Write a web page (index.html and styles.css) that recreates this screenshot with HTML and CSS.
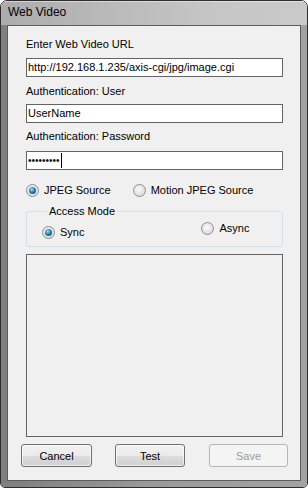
FILE: index.html
```html
<!DOCTYPE html>
<html lang="en">
  <head>
    <meta charset="UTF-8" />
    <meta name="viewport" content="width=device-width, initial-scale=1.0" />
    <title>Web Video</title>
    <link rel="stylesheet" href="styles.css">
  </head>
  <body>
    <div class="window">
      <div class="titlebar">Web Video</div>
      <div class="frame">
        <div class="client">
          <label class="label first">Enter Web Video URL</label>
          <div class="textbox url">http://192.168.1.235/axis-cgi/jpg/image.cgi</div>

          <label class="label user">Authentication: User</label>
          <div class="textbox">UserName</div>

          <label class="label pass">Authentication: Password</label>
          <div class="textbox password"><span class="dots">•••••••••</span><span class="caret"></span></div>

          <div class="sources">
            <div class="option">
              <span class="radio checked"></span>
              <span>JPEG Source</span>
            </div>
            <div class="option motion">
              <span class="radio"></span>
              <span>Motion JPEG Source</span>
            </div>
          </div>

          <fieldset class="group">
            <legend>Access Mode</legend>
            <div class="modes">
              <div class="option sync">
                <span class="radio checked"></span>
                <span>Sync</span>
              </div>
              <div class="option async">
                <span class="radio"></span>
                <span>Async</span>
              </div>
            </div>
          </fieldset>

          <div class="picture"></div>

          <div class="buttons">
            <button class="btn cancel">Cancel</button>
            <button class="btn test">Test</button>
            <button class="btn save" disabled>Save</button>
          </div>
        </div>
      </div>
    </div>
  </body>
</html>
```

FILE: styles.css
```css
* {
  margin: 0;
  padding: 0;
  box-sizing: border-box;
  font-family: "Liberation Sans", Arial, sans-serif;
}

body {
  background: #ffffff;
}

.window {
  width: 308px;
  height: 488px;
  border: 1px solid #2e2e2e;
  border-radius: 7px 7px 5px 5px;
  overflow: hidden;
  display: flex;
  flex-direction: column;
}

.titlebar {
  height: 24px;
  padding-left: 7px;
  font-size: 12px;
  line-height: 23px;
  color: #000;
  background: linear-gradient(to right, #acacac, #bdbdbd 45%, #c6c6c6 70%, #c9c9c9);
  box-shadow: inset 0 1px rgba(255, 255, 255, 0.45);
}

.frame {
  flex: 1;
  padding: 0 6px 6px 6px;
  background: linear-gradient(to right, #7f7f7f, #9a9a9a 50%, #a2a2a2);
}

.client {
  height: 100%;
  border: 1px solid #5c5c5c;
  background: #f0f0f0;
  padding: 0 17px 0 18px;
  display: flex;
  flex-direction: column;
  font-size: 11px;
  color: #000;
}

.label {
  display: block;
  font-size: 11px;
  line-height: 13px;
}

.first {
  margin-top: 12px;
}

.user {
  margin-top: 8px;
}

.pass {
  margin-top: 7px;
}

.textbox {
  height: 19px;
  border: 1px solid #646464;
  background: #fff;
  padding-left: 1px;
  font-size: 11px;
  line-height: 17px;
  white-space: nowrap;
  display: flex;
  align-items: center;
}

.url {
  margin-top: 7px;
}

.user + .textbox {
  margin-top: 6px;
}

.password {
  margin-top: 8px;
}

.dots {
  font-size: 10px;
  color: #111;
}

.caret {
  width: 1px;
  height: 15px;
  margin-left: 1px;
  background: #000;
}

.sources {
  display: flex;
  margin-top: 14px;
  line-height: 13px;
}

.option {
  display: flex;
  align-items: center;
  gap: 5px;
  line-height: 13px;
}

.motion {
  margin-left: 22px;
}

.radio {
  width: 13px;
  height: 13px;
  border-radius: 50%;
  border: 1px solid #8d8e8e;
  background: radial-gradient(circle at 45% 40%, #fafafa, #e6e6e6 50%, #cfcfcf);
  position: relative;
  flex: none;
}

.radio.checked::after {
  content: "";
  position: absolute;
  left: 2px;
  top: 2px;
  width: 7px;
  height: 7px;
  border-radius: 50%;
  background: radial-gradient(circle at 40% 35%, #a6e0f7 0, #3e94c7 35%, #155b8e 70%, #0c3f66);
}

.group {
  margin-top: 8px;
  border: 1px solid #d5dfe5;
  border-radius: 3px;
  padding: 4px 0 7px 15px;
  min-width: 0;
}

.group legend {
  margin-left: 5px;
  padding: 0 2px;
  font-size: 11px;
  line-height: 13px;
}

.modes {
  display: flex;
  align-items: flex-start;
}

.sync {
  margin-top: 4px;
}

.async {
  margin-left: 117px;
}

.picture {
  height: 183px;
  margin-top: 7px;
  border: 1px solid #646464;
}

.buttons {
  display: flex;
  margin: 7px -5px 0 -5px;
}

.btn {
  height: 23px;
  border: 1px solid #707070;
  border-radius: 3px;
  font-size: 11px;
  color: #000;
  background: linear-gradient(#f2f2f2, #ebebeb 50%, #dddddd 51%, #cfcfcf);
  box-shadow: inset 0 0 0 1px rgba(255, 255, 255, 0.6);
}

.cancel {
  width: 71px;
}

.test {
  width: 70px;
  margin-left: 23px;
}

.save {
  width: 79px;
  margin-left: 24px;
  color: #9c9c9c;
  border-color: #b5b5b5;
  background: #f4f4f4;
  box-shadow: none;
}
```
